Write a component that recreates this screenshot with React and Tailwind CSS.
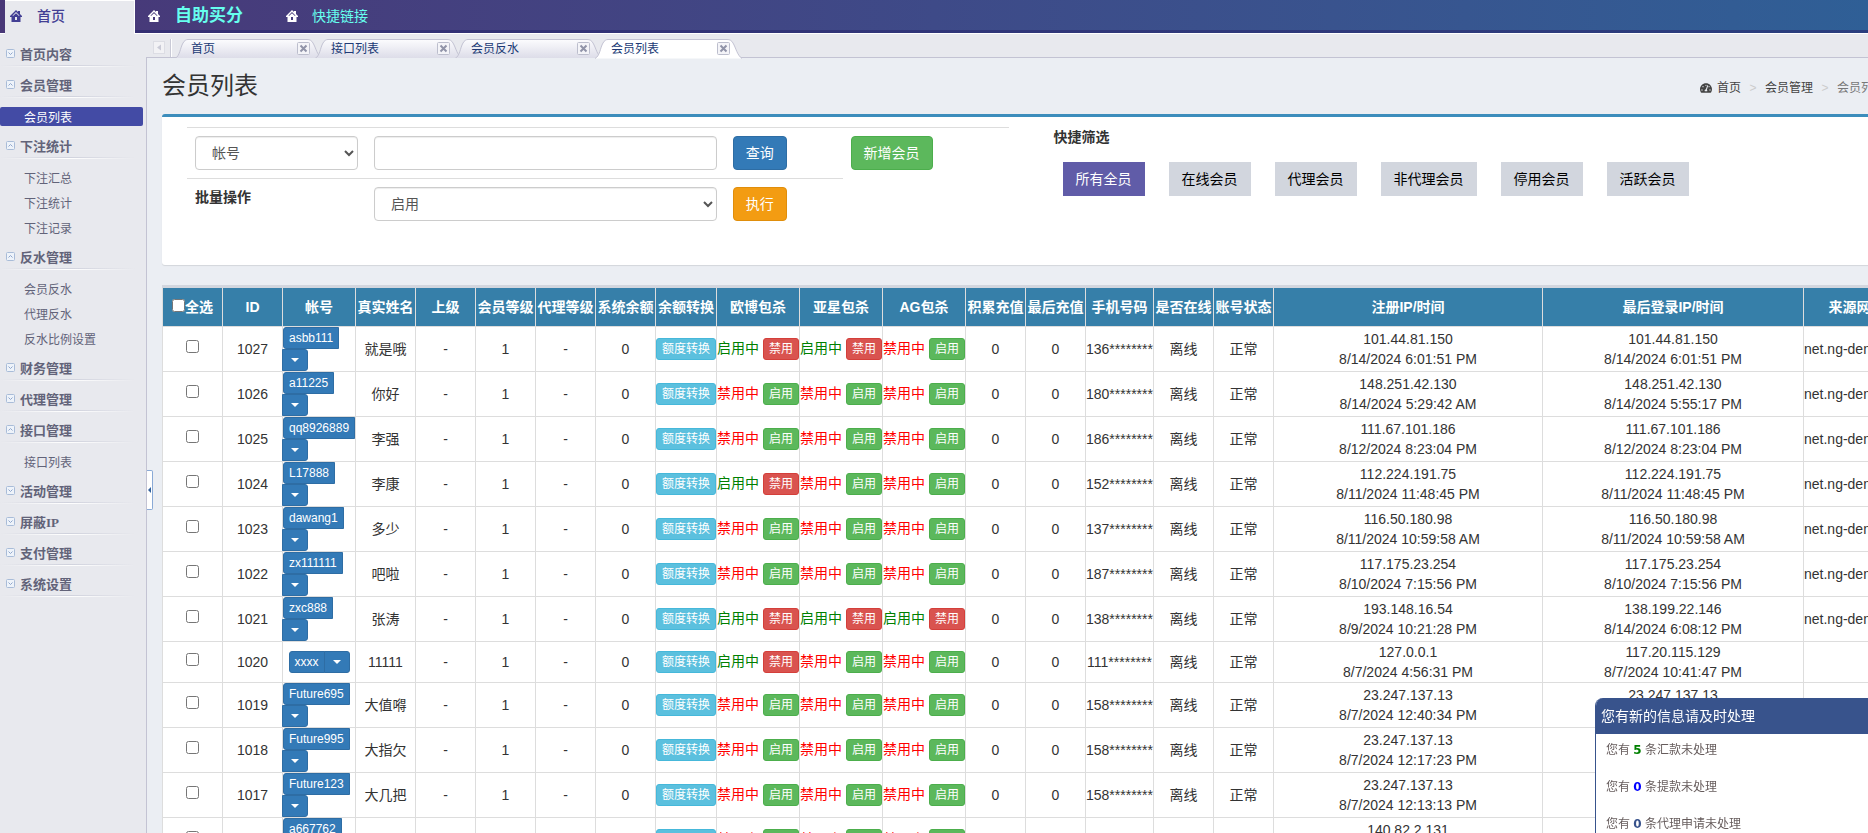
import React, { useState } from "react";
import { FaTachometerAlt } from "react-icons/fa";

const menu = [
  { title: "首页内容", open: false, items: [] },
  { title: "会员管理", open: true, items: ["会员列表"] },
  { title: "下注统计", open: true, items: ["下注汇总", "下注统计", "下注记录"] },
  { title: "反水管理", open: true, items: ["会员反水", "代理反水", "反水比例设置"] },
  { title: "财务管理", open: false, items: [] },
  { title: "代理管理", open: false, items: [] },
  { title: "接口管理", open: true, items: ["接口列表"] },
  { title: "活动管理", open: false, items: [] },
  { title: "屏蔽IP", open: false, items: [] },
  { title: "支付管理", open: false, items: [] },
  { title: "系统设置", open: false, items: [] },
];

const tabs = ["首页", "接口列表", "会员反水", "会员列表"];

const filters = ["所有全员", "在线会员", "代理会员", "非代理会员", "停用会员", "活跃会员"];

const columns = [
  ["ID", "w-[60px]"],
  ["帐号", "w-[73px]"],
  ["真实姓名", "w-[60px]"],
  ["上级", "w-[60px]"],
  ["会员等级", "w-[60px]"],
  ["代理等级", "w-[60px]"],
  ["系统余额", "w-[60px]"],
  ["余额转换", "w-[61px]"],
  ["欧博包杀", "w-[83px]"],
  ["亚星包杀", "w-[83px]"],
  ["AG包杀", "w-[83px]"],
  ["积累充值", "w-[60px]"],
  ["最后充值", "w-[60px]"],
  ["手机号码", "w-[68px]"],
  ["是否在线", "w-[60px]"],
  ["账号状态", "w-[60px]"],
  ["注册IP/时间", "w-[269px]"],
  ["最后登录IP/时间", ""],
  ["来源网址", "w-[106px]"],
];

const site = "net.ng-demo.com";

const members = [
  { id: 1027, account: "asbb111", name: "就是哦", flags: [1, 1, 0], phone: "136********", reg: ["101.44.81.150", "8/14/2024 6:01:51 PM"], last: ["101.44.81.150", "8/14/2024 6:01:51 PM"], site },
  { id: 1026, account: "a11225", name: "你好", flags: [0, 0, 0], phone: "180********", reg: ["148.251.42.130", "8/14/2024 5:29:42 AM"], last: ["148.251.42.130", "8/14/2024 5:55:17 PM"], site },
  { id: 1025, account: "qq8926889", name: "李强", flags: [0, 0, 0], phone: "186********", reg: ["111.67.101.186", "8/12/2024 8:23:04 PM"], last: ["111.67.101.186", "8/12/2024 8:23:04 PM"], site },
  { id: 1024, account: "L17888", name: "李康", flags: [1, 0, 0], phone: "152********", reg: ["112.224.191.75", "8/11/2024 11:48:45 PM"], last: ["112.224.191.75", "8/11/2024 11:48:45 PM"], site },
  { id: 1023, account: "dawang1", name: "多少", flags: [0, 0, 0], phone: "137********", reg: ["116.50.180.98", "8/11/2024 10:59:58 AM"], last: ["116.50.180.98", "8/11/2024 10:59:58 AM"], site },
  { id: 1022, account: "zx111111", name: "吧啦", flags: [0, 0, 0], phone: "187********", reg: ["117.175.23.254", "8/10/2024 7:15:56 PM"], last: ["117.175.23.254", "8/10/2024 7:15:56 PM"], site },
  { id: 1021, account: "zxc888", name: "张涛", flags: [1, 1, 1], phone: "138********", reg: ["193.148.16.54", "8/9/2024 10:21:28 PM"], last: ["138.199.22.146", "8/14/2024 6:08:12 PM"], site },
  { id: 1020, account: "xxxx", name: "11111", flags: [1, 0, 0], phone: "111********", reg: ["127.0.0.1", "8/7/2024 4:56:31 PM"], last: ["117.20.115.129", "8/7/2024 10:41:47 PM"], site: "" },
  { id: 1019, account: "Future695", name: "大值嘚", flags: [0, 0, 0], phone: "158********", reg: ["23.247.137.13", "8/7/2024 12:40:34 PM"], last: ["23.247.137.13", "8/7/2024 12:40:34 PM"], site: "" },
  { id: 1018, account: "Future995", name: "大指欠", flags: [0, 0, 0], phone: "158********", reg: ["23.247.137.13", "8/7/2024 12:17:23 PM"], last: ["23.247.137.13", "8/7/2024 12:17:23 PM"], site: "" },
  { id: 1017, account: "Future123", name: "大几把", flags: [0, 0, 0], phone: "158********", reg: ["23.247.137.13", "8/7/2024 12:13:13 PM"], last: ["23.247.137.13", "8/7/2024 12:13:13 PM"], site: "" },
  { id: 1016, account: "a667762", name: "张三", flags: [0, 0, 0], phone: "158********", reg: ["140.82.2.131", "8/7/2024 11:02:40 AM"], last: ["140.82.2.131", "8/7/2024 11:02:40 AM"], site: "" },
];

function HomeIcon({ className }) {
  return (
    <svg viewBox="0 0 12 12" className={"w-3 h-3 shrink-0 " + className} aria-hidden="true">
      <path
        fill="currentColor"
        fillRule="evenodd"
        d="M6 0 L8 2 V1 H10 V4 L12 6 V7 H10.5 V12 H1.5 V7 H0 V6 Z M6 2 L2.5 5.5 L3 6 L6 3.2 L9 6 L9.5 5.5 Z M5 7 V10 H7 V7 Z"
      />
    </svg>
  );
}

function ToggleIcon({ open }) {
  return (
    <svg viewBox="0 0 9 9" className="w-[9px] h-[9px] shrink-0" fill="none" aria-hidden="true">
      <rect x="0.5" y="0.5" width="8" height="8" rx="1" fill="#eef3fa" stroke="#a9bcd8" />
      <path d={open ? "M2.5 5.5 L4.5 3.5 L6.5 5.5" : "M2.5 3.5 L4.5 5.5 L6.5 3.5"} stroke="#8fa6cc" />
    </svg>
  );
}

function Sidebar({ current, onPick }) {
  return (
    <aside className="w-[146px] shrink-0 pt-[6px] bg-[#e8e9ee] font-['Liberation_Serif','Noto_Sans_CJK_SC',serif]">
      {menu.map((group) => (
        <div key={group.title}>
          <button className="block w-full mb-1 text-left">
            <span className="flex items-center gap-[5px] h-[25px] pl-[6px] pt-px">
              <ToggleIcon open={group.open} />
              <span className="pt-1 text-[13px] leading-4 font-bold text-[#626379]">{group.title}</span>
            </span>
            <span className="block h-px w-[135px] bg-linear-to-r from-transparent via-[#d0d2dd] to-transparent"></span>
            <span className="block h-px w-[135px] bg-linear-to-r from-transparent via-white to-transparent"></span>
          </button>
          {group.items.length > 0 && (
            <ul className="pt-[2px] pb-[3px]">
              {group.items.map((item) => (
                <li key={item} className="py-[3px]">
                  <a
                    href="#"
                    onClick={() => onPick(item)}
                    className={
                      item === current
                        ? "block w-[143px] h-[19px] pl-6 pt-px rounded-[2px] bg-[#434ba5] text-white text-xs leading-5"
                        : "block w-[143px] h-[19px] pl-6 pt-px text-[#626379] text-xs leading-5"
                    }
                  >
                    {item}
                  </a>
                </li>
              ))}
            </ul>
          )}
        </div>
      ))}
    </aside>
  );
}

function Tab({ label, active }) {
  return (
    <li className={active ? "relative z-10 flex items-center w-[140px] h-[24px] mt-px" : "relative flex items-center w-[140px] h-[24px] mt-px"}>
      <svg viewBox="0 0 148 20" className="absolute left-0 top-[4px] w-[148px] h-[20px]" aria-hidden="true">
        <defs>
          <linearGradient id="tabFill" x1="0" y1="0" x2="0" y2="1">
            <stop offset="0" stopColor="#fcfcfe" />
            <stop offset="1" stopColor="#dcdce8" />
          </linearGradient>
        </defs>
        <path
          d="M0 19.5 C5 17 5 9 8 4 C9.5 1.5 11 0.5 13 0.5 H132 C135 0.5 136.5 1.5 138 4 C141 9 142 16 147 19.5"
          fill={active ? "#ffffff" : "url(#tabFill)"}
          stroke="#c3c3d3"
        />
      </svg>
      <a href="#" className="relative pl-4 pt-[4px] text-xs leading-4 text-[#203a75]">
        {label}
      </a>
      <button aria-label={"关闭" + label} className="relative ml-auto mr-[5px] mt-[2px]">
        <svg viewBox="0 0 13 13" className="block w-[13px] h-[13px]" fill="none" aria-hidden="true">
          <rect x="0.5" y="0.5" width="12" height="12" rx="1" fill="#f4f4f8" stroke="#bcbecd" />
          <path d="M3.5 3.5 L9.5 9.5 M9.5 3.5 L3.5 9.5" stroke="#9093a8" strokeWidth="2" />
        </svg>
      </button>
    </li>
  );
}

function FlagCell({ on }) {
  return (
    <td className="border border-[#ddd] whitespace-nowrap text-left">
      <span className={on ? "inline-block pb-[2px] align-middle text-[#008000]" : "inline-block pb-[2px] align-middle text-[#f00]"}>
        {on ? "启用中" : "禁用中"}
      </span>{" "}
      <button
        className={
          on
            ? "align-middle h-[22px] px-[5px] border rounded-[3px] text-xs leading-[18px] text-white bg-[#d9534f] border-[#d43f3a]"
            : "align-middle h-[22px] px-[5px] border rounded-[3px] text-xs leading-[18px] text-white bg-[#5cb85c] border-[#4cae4c]"
        }
      >
        {on ? "禁用" : "启用"}
      </button>
    </td>
  );
}

function MemberRow({ m, checked, onCheck }) {
  const cell = "border border-[#ddd]";
  return (
    <tr className="bg-white">
      <td className={cell}>
        <input
          type="checkbox"
          aria-label={"选择" + m.id}
          checked={checked}
          onChange={onCheck}
          className="w-[13px] h-[13px] mb-[6px] align-middle"
        />
      </td>
      <td className={cell}>{m.id}</td>
      <td className={cell}>
        <div className="inline-flex flex-wrap align-middle">
          <button className="h-[22px] px-[5px] border border-[#2e6da4] rounded-l-[3px] bg-[#337ab7] text-white text-xs leading-[18px]">
            {m.account}
          </button>
          <button
            aria-label={m.account + "操作"}
            className="flex items-center justify-center w-[26px] h-[22px] -ml-px border border-[#2e6da4] rounded-r-[3px] bg-[#337ab7]"
          >
            <span className="border-x-4 border-t-4 border-x-transparent border-t-white mt-px"></span>
          </button>
        </div>
      </td>
      <td className={cell}>{m.name}</td>
      <td className={cell}>-</td>
      <td className={cell}>1</td>
      <td className={cell}>-</td>
      <td className={cell}>0</td>
      <td className={cell}>
        <button className="align-middle h-[22px] px-[5px] border border-[#46b8da] rounded-[3px] bg-[#5bc0de] text-white text-xs leading-[18px] whitespace-nowrap">
          额度转换
        </button>
      </td>
      {m.flags.map((f, i) => (
        <FlagCell key={i} on={f === 1} />
      ))}
      <td className={cell}>0</td>
      <td className={cell}>0</td>
      <td className={cell}>{m.phone}</td>
      <td className={cell}>离线</td>
      <td className={cell}>正常</td>
      <td className={cell}>
        {m.reg[0]}
        <br />
        {m.reg[1]}
      </td>
      <td className={cell}>
        {m.last[0]}
        <br />
        {m.last[1]}
      </td>
      <td className="border border-[#ddd] whitespace-nowrap text-left">{m.site}</td>
    </tr>
  );
}

function SearchBox({ filter, setFilter }) {
  const control =
    "w-full h-[34px] px-3 py-[6px] border border-[#ccc] rounded-[4px] bg-white text-[#555] text-sm leading-5 shadow-[inset_0_1px_1px_rgba(0,0,0,0.075)]";
  return (
    <div className="flex border-t-[3px] border-[#3c8dbc] rounded-[3px] bg-white pt-[10px] pb-9 shadow-[0_1px_1px_rgba(0,0,0,0.1)]">
      <div className="w-1/2 pl-[25px] pr-[15px]">
        <div className="grid grid-cols-[179fr_359fr_118fr_166fr]">
          <div className="border-t border-[#ddd] p-2">
            <select aria-label="查询类型" className={control}>
              <option>帐号</option>
            </select>
          </div>
          <div className="border-t border-[#ddd] p-2">
            <input type="text" aria-label="关键字" className={control} />
          </div>
          <div className="border-t border-[#ddd] p-2">
            <button className="h-[34px] px-3 border border-[#2e6da4] rounded-[4px] bg-[#337ab7] text-white">查询</button>
          </div>
          <div className="border-t border-[#ddd] p-2">
            <button className="h-[34px] px-3 border border-[#4cae4c] rounded-[4px] bg-[#5cb85c] text-white">新增会员</button>
          </div>
          <div className="border-t border-[#ddd] p-2">
            <label htmlFor="batch" className="font-bold">
              批量操作
            </label>
          </div>
          <div className="border-t border-[#ddd] p-2">
            <select id="batch" className={control}>
              <option>启用</option>
            </select>
          </div>
          <div className="border-t border-[#ddd] p-2">
            <button className="h-[34px] px-3 border border-[#e08e0b] rounded-[4px] bg-[#f39c12] text-white">执行</button>
          </div>
        </div>
      </div>
      <div className="w-1/2 pl-[30px]">
        <div className="font-bold">快捷筛选</div>
        <div className="flex gap-6 mt-[15px] pl-[9px]">
          {filters.map((f) => (
            <button
              key={f}
              onClick={() => setFilter(f)}
              className={f === filter ? "h-[34px] px-[13px] bg-[#605ca8] text-white" : "h-[34px] px-[13px] bg-[#d2d6de] text-black"}
            >
              {f}
            </button>
          ))}
        </div>
      </div>
    </div>
  );
}

function Notice() {
  return (
    <div className="fixed right-0 bottom-0 w-[273px] h-[135px] overflow-hidden rounded-tl-[8px] border-l border-[#38538c] bg-white text-xs">
      <div className="h-9 pl-[5px] bg-[#38538c] text-white text-sm leading-9">您有新的信息请及时处理</div>
      <ul className="pl-[10px] text-[#665c5c] leading-[37px] -mt-[2px]">
        <li>
          您有 <b className="font-['DejaVu_Sans',sans-serif] text-[#008000]">5</b> 条汇款未处理
        </li>
        <li>
          您有 <b className="font-['DejaVu_Sans',sans-serif] text-[#0000ff]">0</b> 条提款未处理
        </li>
        <li>
          您有 <b className="font-['DejaVu_Sans',sans-serif] text-[#38538c]">0</b> 条代理申请未处理
        </li>
      </ul>
    </div>
  );
}

export default function App() {
  const [current, setCurrent] = useState("会员列表");
  const [filter, setFilter] = useState("所有全员");
  const [picked, setPicked] = useState([]);

  function toggle(id) {
    setPicked(picked.includes(id) ? picked.filter((p) => p !== id) : [...picked, id]);
  }

  function toggleAll() {
    setPicked(picked.length === members.length ? [] : members.map((m) => m.id));
  }

  return (
    <div className="flex flex-col h-screen overflow-hidden bg-[#e8e9ee] text-sm leading-5 text-[#333] font-['Liberation_Sans','Noto_Sans_CJK_SC',sans-serif]">
      <header className="flex h-[34px] shrink-0 bg-linear-to-r from-[#483777] via-[#3e4a88] to-[#2f5f96]">
        <div className="w-[5px] border-b border-white"></div>
        <a
          href="#"
          className="flex items-center gap-[15px] w-[130px] pl-[5px] pb-[4px] border-t border-r border-white bg-[#e8e9ee] text-[#433f94] text-sm font-medium"
        >
          <HomeIcon className="text-[#433f94]" />
          首页
        </a>
        <nav className="flex flex-1 items-center pb-[2px] pl-[13px] border-b border-white text-[#66ffee] shadow-[inset_0_-3px_0_rgba(40,40,110,0.6)]">
          <HomeIcon className="text-white" />
          <a href="#" className="ml-[15px] text-[17px] leading-5 font-bold">
            自助买分
          </a>
          <HomeIcon className="ml-[43px] text-white" />
          <a href="#" className="ml-[14px]">
            快捷链接
          </a>
        </nav>
      </header>

      <div className="flex flex-1 min-h-0">
        <Sidebar current={current} onPick={setCurrent} />
        <div className="flex flex-col flex-1 min-w-0">
          <div className="flex h-6 shrink-0 border-b border-[#c3c3d3]">
            <button aria-label="向左滚动" className="ml-[7px] mt-[7px] w-3 h-[13px]">
              <svg viewBox="0 0 12 13" className="block w-3 h-[13px]" aria-hidden="true">
                <rect x="0.5" y="0.5" width="11" height="12" fill="#f2f2f5" stroke="#dcdde4" />
                <path d="M8 3.5 V9.5 L4 6.5 Z" fill="#c9cad6" />
              </svg>
            </button>
            <span className="ml-[5px] mt-[5px] mr-[3px] h-[18px] w-[2px] border-l border-[#c9cad6] bg-white"></span>
            <ul className="flex">
              {tabs.map((t) => (
                <Tab key={t} label={t} active={t === current} />
              ))}
            </ul>
          </div>

          <main className="relative flex-1 min-h-0 overflow-hidden border-l border-[#c3c3d3] bg-[#ebeef3]">
            <div className="w-[calc(100%+32px)] px-[15px]">
              <div className="flex items-start justify-between pt-[15px]">
                <h1 className="text-2xl leading-[26px]">会员列表</h1>
                <nav className="flex items-center pt-[5px] text-xs leading-5 text-[#444]">
                  <FaTachometerAlt className="w-3 h-3 mr-[5px]" />
                  <a href="#">首页</a>
                  <span className="w-6 text-center text-[#ccc]">&gt;</span>
                  <a href="#">会员管理</a>
                  <span className="w-6 text-center text-[#ccc]">&gt;</span>
                  <span className="text-[#777]">会员列表</span>
                </nav>
              </div>

              <div className="mt-[15px]">
                <SearchBox filter={filter} setFilter={setFilter} />
              </div>

              <div className="mt-5 border-t-[3px] border-[#d2d6de]">
                <table className="table-fixed w-[calc(100%+25px)] border-collapse text-center">
                  <thead>
                    <tr className="h-[38px] bg-[#367fa9] text-white whitespace-nowrap">
                      <th className="w-[60px] border border-t-0 border-[#ddd]">
                        <label>
                          <input
                            type="checkbox"
                            checked={picked.length === members.length}
                            onChange={toggleAll}
                            className="w-[13px] h-[13px]"
                          />
                          全选
                        </label>
                      </th>
                      {columns.map(([name, width]) => (
                        <th key={name} className={"border border-t-0 border-[#ddd] " + width}>
                          {name}
                        </th>
                      ))}
                    </tr>
                  </thead>
                  <tbody>
                    {members.map((m) => (
                      <MemberRow key={m.id} m={m} checked={picked.includes(m.id)} onCheck={() => toggle(m.id)} />
                    ))}
                  </tbody>
                </table>
              </div>
            </div>

            <button
              aria-label="收起菜单"
              className="absolute left-0 top-[412px] flex items-center justify-center w-[6px] h-10 rounded-r-[2px] border border-l-0 border-[#8aaad6] bg-white"
            >
              <span className="border-y-[3px] border-r-[3px] border-y-transparent border-r-[#31619c]"></span>
            </button>
          </main>
        </div>
      </div>

      <Notice />
    </div>
  );
}
